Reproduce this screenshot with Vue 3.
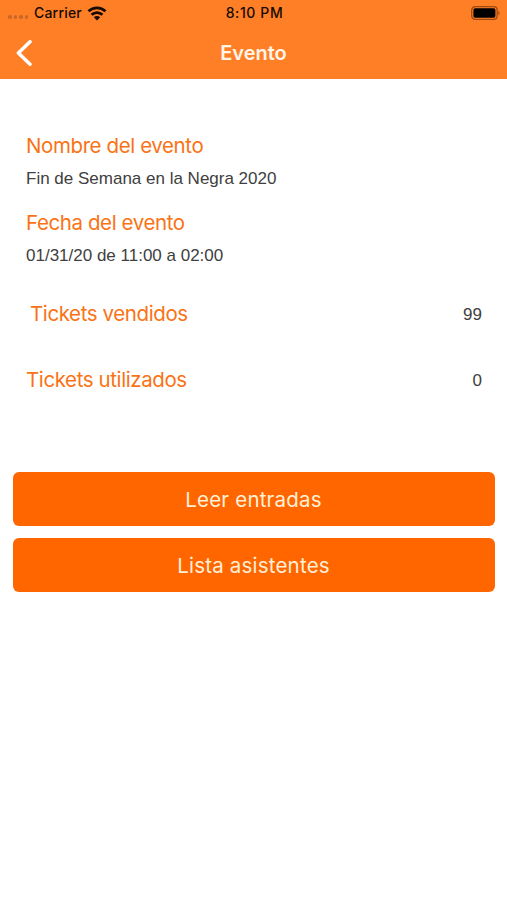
<script setup>
const event = {
  name: 'Fin de Semana en la Negra 2020',
  date: '01/31/20 de 11:00 a 02:00',
}
const counters = [
  { label: 'Tickets vendidos', value: 99, inset: true },
  { label: 'Tickets utilizados', value: 0, inset: false },
]
const actions = ['Leer entradas', 'Lista asistentes']
</script>

<template>
  <div class="screen">
    <header class="top">
      <div class="status">
        <div class="carrier">
          <span class="dots"><i v-for="n in 4" :key="n"></i></span>
          <span class="carrier-name">Carrier</span>
          <svg class="wifi" width="20" height="15" viewBox="0 0 20 15">
            <g fill="none" stroke="#160a02" stroke-width="2.8">
              <path d="M1.5 5.3a12.3 12.3 0 0 1 17 0" />
              <path d="M4.6 8.7a7.8 7.8 0 0 1 10.8 0" />
            </g>
            <path d="M10 14.4 6.8 11.2a4.6 4.6 0 0 1 6.4 0z" fill="#160a02" />
          </svg>
        </div>
        <span class="time">8:10 PM</span>
        <svg class="battery" width="30" height="14" viewBox="0 0 30 14">
          <rect x=".7" y=".7" width="25.4" height="12.6" rx="3.4" fill="none" stroke="#a14a0e" stroke-width="1.3" />
          <rect x="2.4" y="2.3" width="22" height="9.4" rx="1.8" fill="#000" />
          <path d="M27.3 4.8c1.8.8 1.8 3.6 0 4.4z" fill="#a14a0e" />
        </svg>
      </div>
      <nav class="nav">
        <button class="back" aria-label="Atrás">
          <svg width="16" height="26" viewBox="0 0 16 26">
            <path d="M14 1.8 2.4 13 14 24.2" fill="none" stroke="#fff" stroke-width="3.5" stroke-linecap="round" stroke-linejoin="round" />
          </svg>
        </button>
        <h1>Evento</h1>
      </nav>
    </header>

    <main>
      <section class="details">
        <h2 class="name-label">Nombre del evento</h2>
        <p class="name">{{ event.name }}</p>
        <h2 class="date-label">Fecha del evento</h2>
        <p class="date">{{ event.date }}</p>
      </section>
      <section class="counters">
        <div v-for="c in counters" :key="c.label" class="counter" :class="{ inset: c.inset }">
          <h2>{{ c.label }}</h2>
          <span>{{ c.value }}</span>
        </div>
      </section>
      <div class="actions">
        <button v-for="a in actions" :key="a" class="action">{{ a }}</button>
      </div>
    </main>
  </div>
</template>

<style>
body {
  background: #fff;
}
</style>

<style scoped>
.screen {
  width: 507px;
  height: 900px;
  overflow: hidden;
  background: #fff;
  font-family: Inter, 'Liberation Sans', sans-serif;
}
button {
  border: 0;
  padding: 0;
  font-family: inherit;
}
h1, h2, p {
  margin: 0;
}
.top {
  height: 79px;
  background: #ff7f27;
}
.status {
  height: 26px;
  display: grid;
  grid-template-columns: 1fr auto 1fr;
  align-items: center;
  padding: 0 6px 0 8px;
  color: #160a02;
  font-size: 14px;
  line-height: 16px;
  font-weight: 500;
}
.carrier {
  display: flex;
  align-items: center;
}
.carrier-name, .time {
  padding-bottom: 1px;
}
.carrier-name {
  letter-spacing: 0.2px;
}
.time {
  letter-spacing: 0.6px;
}
.dots {
  display: flex;
  gap: 2px;
  width: 26px;
  padding-top: 8px;
}
.dots i {
  width: 3.6px;
  height: 3.6px;
  border-radius: 50%;
  background: #c9662a;
}
.wifi {
  margin-left: 5px;
}
.battery {
  justify-self: end;
}
.nav {
  height: 53px;
  display: grid;
  grid-template-columns: 1fr auto 1fr;
  align-items: center;
}
.back {
  display: flex;
  width: 16px;
  margin-left: 16px;
  background: none;
}
h1 {
  color: #fff5e9;
  font-size: 20px;
  line-height: 24px;
  font-weight: 600;
}
h2 {
  color: #f97316;
  font-size: 20.5px;
  line-height: 26px;
  font-weight: 400;
  letter-spacing: -0.4px;
}
p, .counter span {
  color: #404040;
  font-family: 'Liberation Sans', sans-serif;
  font-size: 17px;
  line-height: 20px;
}
.counter span {
  padding-top: 2px;
}
.details {
  padding: 54px 26px 0;
}
.name, .date {
  margin-top: 10px;
}
.date-label {
  margin-top: 21px;
}
.counters {
  padding: 35px 25px 0 26px;
}
.counter {
  height: 26px;
  margin-bottom: 40px;
  display: flex;
  align-items: center;
  justify-content: space-between;
}
.inset h2 {
  padding-left: 4px;
}
.actions {
  padding: 39px 12.5px 0;
  display: grid;
  gap: 12px;
}
.action {
  height: 54px;
  border-radius: 6px;
  background: #ff6600;
  color: #fff0d8;
  font-size: 20.5px;
  letter-spacing: 0.2px;
}
</style>
